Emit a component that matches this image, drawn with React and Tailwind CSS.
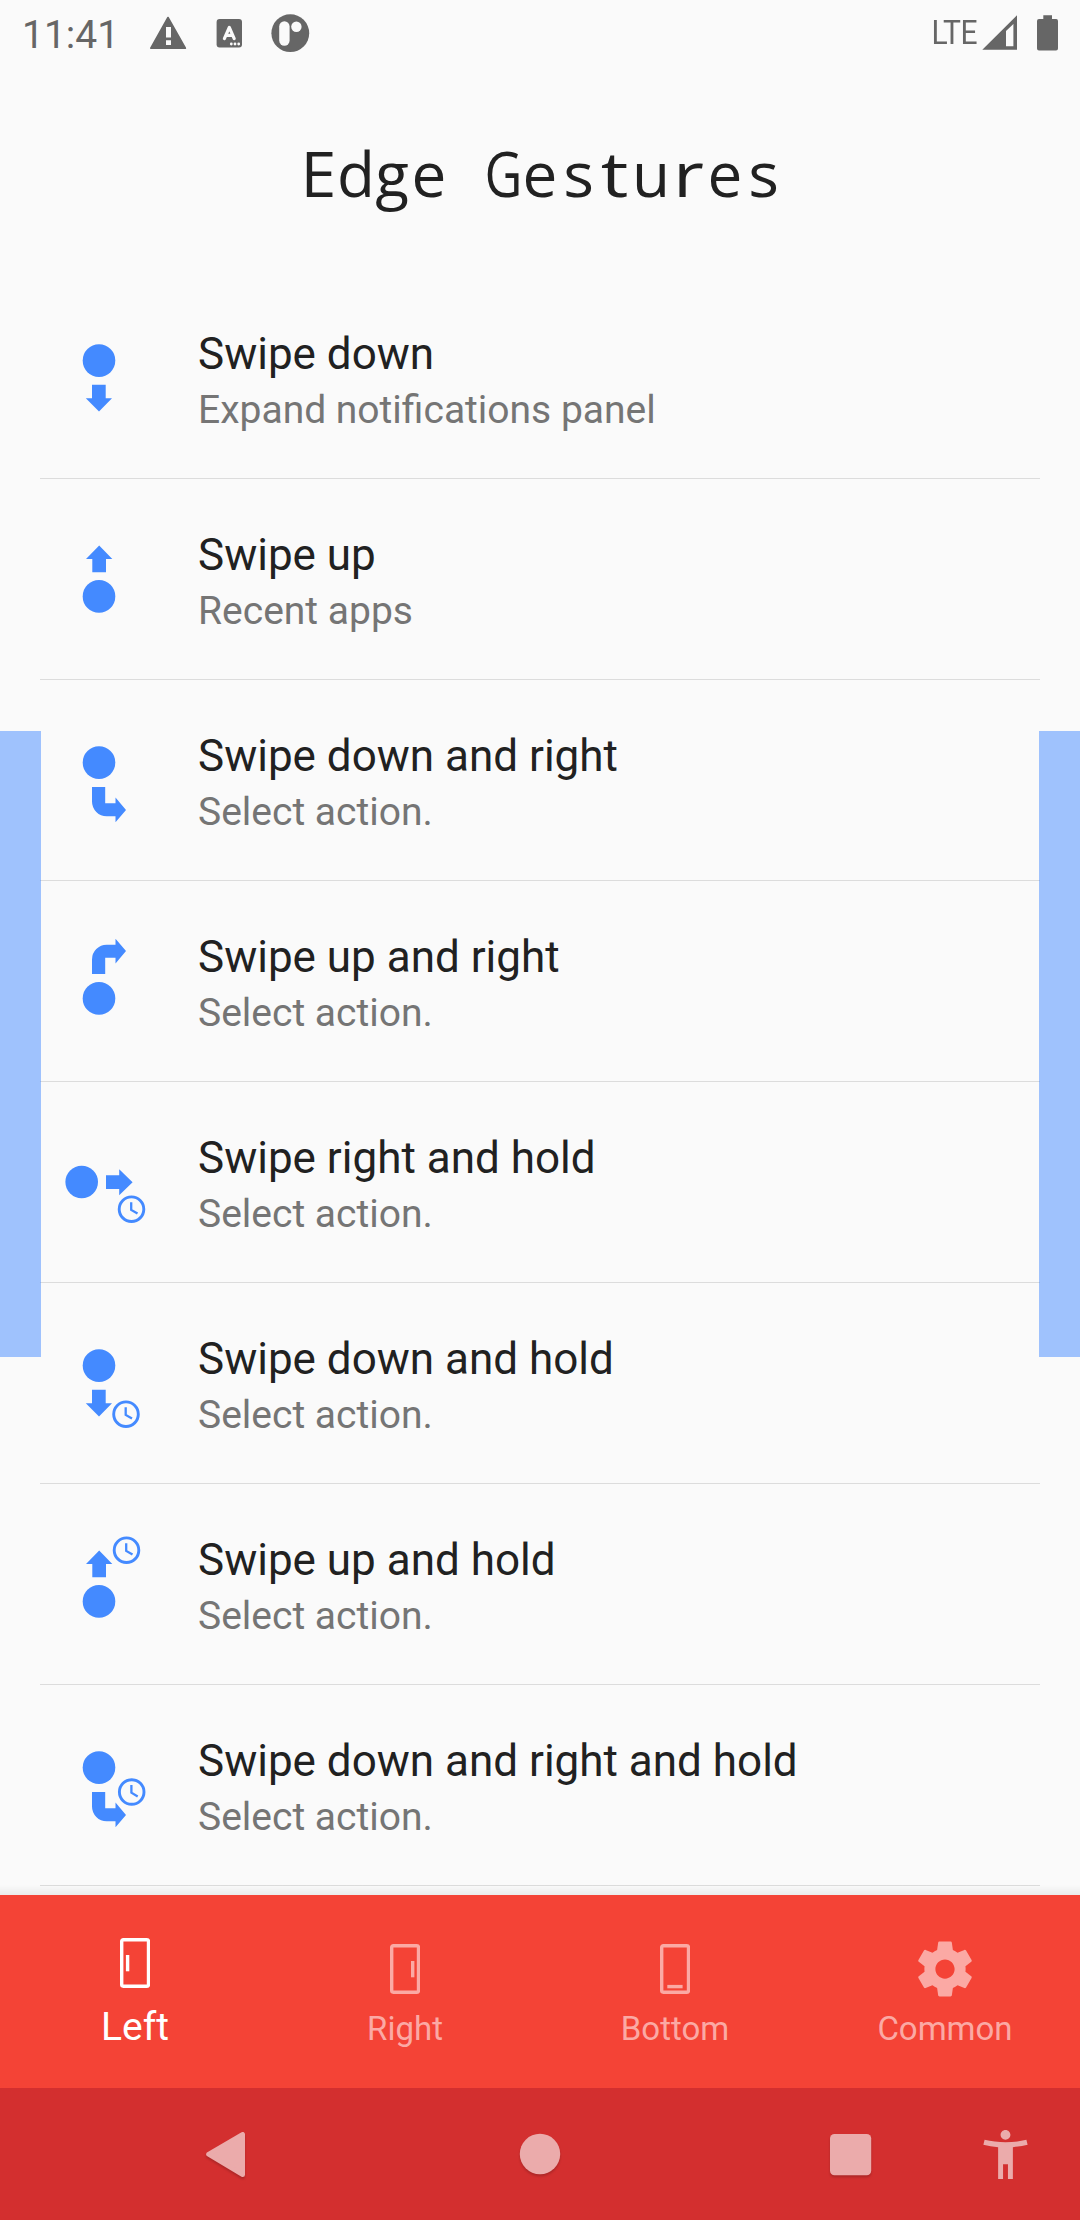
import React from "react";

const BLUE = "#448aff";

function Dot({ x, y }) {
  return <circle cx={x} cy={y} r="16.3" />;
}

function Clock({ x, y }) {
  return (
    <g transform={`translate(${x} ${y})`} fill="none" stroke={BLUE} strokeWidth="2.9">
      <circle r="12.3" />
      <path d="M-0.3 -7V0.7L6 4.4" strokeWidth="2.3" />
    </g>
  );
}

const ARROW_DOWN = "M92 106.7H105.7V120.3H112L99 133.5L85.8 120.3H92Z";
const ARROW_UP = "M92.3 93.3H106V80H112.3L99.2 66.5L86 80H92.3Z";
const ARROW_RIGHT = "M106 93.3V107H119.2V113.3L132.6 100.2L119.2 87.2V93.3Z";
const TURN_DOWN = "M92 107H105.2V123.3H115.5V117.6L126 130L115.5 142.2V136.3H106.7A14.7 14.7 0 0 1 92 121.6Z";
const TURN_UP = "M92 93H105.2V76.7H115.5V82.4L126 70L115.5 57.8V63.7H106.7A14.7 14.7 0 0 0 92 78.4Z";

const gestures = [
  { title: "Swipe down", sub: "Expand notifications panel", dot: [99, 82.6], path: ARROW_DOWN },
  { title: "Swipe up", sub: "Recent apps", dot: [99, 117.4], path: ARROW_UP },
  { title: "Swipe down and right", sub: "Select action.", dot: [99, 82.6], path: TURN_DOWN },
  { title: "Swipe up and right", sub: "Select action.", dot: [99, 117.4], path: TURN_UP },
  { title: "Swipe right and hold", sub: "Select action.", dot: [81.7, 100], path: ARROW_RIGHT, clock: [131.5, 127.2] },
  { title: "Swipe down and hold", sub: "Select action.", dot: [99, 82.6], path: ARROW_DOWN, clock: [126, 131.2] },
  { title: "Swipe up and hold", sub: "Select action.", dot: [99, 117.4], path: ARROW_UP, clock: [126.5, 66.2] },
  { title: "Swipe down and right and hold", sub: "Select action.", dot: [99, 82.6], path: TURN_DOWN, clock: [131.7, 107] },
];

function GestureRow({ item }) {
  return (
    <li className="flex h-[201px] border-b border-[#dcdcdc]">
      <svg className="h-[200px] w-[158px] shrink-0" viewBox="40 0 158 200" fill={BLUE}>
        <Dot x={item.dot[0]} y={item.dot[1]} />
        <path d={item.path} />
        {item.clock && <Clock x={item.clock[0]} y={item.clock[1]} />}
      </svg>
      <div className="pt-[50px]">
        <p className="text-[44px] leading-[52px] text-[#212121]">{item.title}</p>
        <p className="mt-[8px] text-[39px] leading-[45px] text-[#757575]">{item.sub}</p>
      </div>
    </li>
  );
}

const letterFit = {
  G: "scale-x-[0.84]",
  t: "scale-x-[1.25]",
  r: "scale-x-[1.22]",
  E: "scale-x-[1.04]",
  d: "translate-x-px",
  s: "translate-x-px scale-x-[1.04]",
};

function PageTitle({ text }) {
  return (
    <h1 className="flex justify-center whitespace-pre font-['Open_Sans',sans-serif] text-[62px] leading-[84px] text-[#212121]">
      <span>
        {text.split("").map((letter, i) => (
          <span key={i} className={`inline-flex w-[37px] justify-center ${letterFit[letter] || ""}`}>
            {letter}
          </span>
        ))}
      </span>
    </h1>
  );
}

function StatusBar() {
  return (
    <header className="flex h-[66px] text-[#666666]">
      <span className="w-[124px] pl-[22px] pt-[13px] text-[39px] leading-[45px]">11:41</span>
      <svg className="h-[66px] w-[200px]" viewBox="124 0 200 66" fill="#666666">
        <path d="M168 17.5L185.4 48.2H150.8Z" stroke="#666666" strokeWidth="1.6" strokeLinejoin="round" />
        <path d="M166 27H171V37.5H166ZM166 40.3H171V45H166Z" fill="#fafafa" />
        <rect x="216.6" y="19" width="25.4" height="28.5" rx="3" />
        <path d="M224.4 38.6L229.3 27.4L234.2 38.6M226.5 35.4H232" fill="none" stroke="#fafafa" strokeWidth="3.2" strokeLinecap="round" strokeLinejoin="round" />
        <g fill="#fafafa">
          <circle cx="231.3" cy="44" r="1.4" />
          <circle cx="235" cy="44" r="1.4" />
          <circle cx="238.7" cy="44" r="1.4" />
        </g>
        <circle cx="290.3" cy="33.2" r="18.9" />
        <rect x="279.2" y="21.3" width="10.4" height="24.4" rx="5.2" fill="#fafafa" />
        <circle cx="296.4" cy="26.8" r="5.2" fill="#fafafa" />
      </svg>
      <span className="ml-auto origin-right scale-x-[0.91] pt-[13px] text-[33px] leading-[39px] tracking-[-0.6px]">LTE</span>
      <svg className="h-[66px] w-[103px]" viewBox="977 0 103 66" fill="#666666">
        <path fillRule="evenodd" d="M982.3 49.8H1017V15.3ZM1006 31L1013.4 24V46.2H1006Z" />
        <path d="M1043.3 15.2H1052V19H1056.2A2 2 0 0 1 1058 21V48.4A2 2 0 0 1 1056 50.4H1039A2 2 0 0 1 1037 48.4V21A2 2 0 0 1 1039 19H1043.3Z" />
      </svg>
    </header>
  );
}

function PhoneIcon({ bar }) {
  return (
    <svg className="h-[50px] w-[30px]" viewBox="0 0 30 50" fill="none" stroke="currentColor" strokeWidth="3.4">
      <rect x="1.7" y="1.8" width="26.8" height="46.4" rx="1.6" />
      <path d={bar} />
    </svg>
  );
}

function GearIcon() {
  return (
    <svg className="-my-2 h-[66px] w-[66px]" viewBox="0 0 24 24" fill="currentColor">
      <path d="M19.43 12.98c.04-.32.07-.64.07-.98s-.03-.66-.07-.98l2.11-1.65c.19-.15.24-.42.12-.64l-2-3.46c-.12-.22-.39-.3-.61-.22l-2.49 1c-.52-.4-1.08-.73-1.69-.98l-.38-2.65C14.46 2.18 14.25 2 14 2h-4c-.25 0-.46.18-.49.42l-.38 2.65c-.61.25-1.17.59-1.69.98l-2.49-1c-.23-.09-.49 0-.61.22l-2 3.46c-.13.22-.07.49.12.64l2.11 1.65c-.04.32-.07.65-.07.98s.03.66.07.98l-2.11 1.65c-.19.15-.24.42-.12.64l2 3.46c.12.22.39.3.61.22l2.49-1c.52.4 1.08.73 1.69.98l.38 2.65c.03.24.24.42.49.42h4c.25 0 .46-.18.49-.42l.38-2.65c.61-.25 1.17-.59 1.69-.98l2.49 1c.23.09.49 0 .61-.22l2-3.46c.12-.22.07-.49-.12-.64l-2.11-1.65zM12 15.5c-1.93 0-3.5-1.57-3.5-3.5s1.57-3.5 3.5-3.5 3.5 1.57 3.5 3.5-1.57 3.5-3.5 3.5z" />
    </svg>
  );
}

const tabs = [
  { label: "Left", icon: <PhoneIcon bar="M7.6 17V33.3" />, active: true },
  { label: "Right", icon: <PhoneIcon bar="M22.7 17V33.3" /> },
  { label: "Bottom", icon: <PhoneIcon bar="M7.3 42.6H22.6" /> },
  { label: "Common", icon: <GearIcon /> },
];

function TabBar() {
  return (
    <nav className="relative grid h-[193px] grid-cols-4 bg-[#f44336]">
      <div className="absolute inset-x-0 bottom-full h-[10px] bg-gradient-to-t from-black/6 to-transparent" />
      {tabs.map((tab) =>
        tab.active ? (
          <div key={tab.label} className="flex flex-col items-center pt-[43px] text-white">
            {tab.icon}
            <span className="mt-[17px] text-[39px] leading-[45px]">{tab.label}</span>
          </div>
        ) : (
          <div key={tab.label} className="flex flex-col items-center pt-[49px] text-[#fba9a4]">
            {tab.icon}
            <span className="mt-[15px] text-[33px] leading-[39px]">{tab.label}</span>
          </div>
        )
      )}
    </nav>
  );
}

function SystemNav() {
  return (
    <footer className="flex h-[132px] bg-[#d32f2f] pl-[189px] text-[#ebabab]">
      <svg className="h-[132px] w-[80px] drop-shadow-[0_2px_1px_rgba(0,0,0,0.18)]" viewBox="189 0 80 132" fill="currentColor">
        <path d="M208.5 66.3L242.7 46.3V86.7Z" stroke="currentColor" strokeWidth="4.6" strokeLinejoin="round" />
      </svg>
      <svg className="ml-[231px] h-[132px] w-[80px] drop-shadow-[0_2px_1px_rgba(0,0,0,0.18)]" viewBox="500 0 80 132" fill="currentColor">
        <circle cx="540" cy="66" r="20.2" />
      </svg>
      <svg className="ml-[231px] h-[132px] w-[80px] drop-shadow-[0_2px_1px_rgba(0,0,0,0.18)]" viewBox="811 0 80 132" fill="currentColor">
        <rect x="830" y="46" width="41.2" height="41.2" rx="4.5" />
      </svg>
      <svg className="ml-[85px] mt-[37px] h-[59px] w-[59px]" viewBox="0 0 24 24" fill="currentColor">
        <path d="M20.5 6c-2.61.7-5.67 1-8.5 1s-5.89-.3-8.5-1L3 8c1.86.5 4 .83 6 1v13h2v-6h2v6h2V9c2-.17 4.14-.5 6-1l-.5-2zM12 6c1.1 0 2-.9 2-2s-.9-2-2-2-2 .9-2 2 .9 2 2 2z" />
      </svg>
    </footer>
  );
}

export default function App() {
  return (
    <div className="relative flex h-[2220px] w-[1080px] flex-col overflow-hidden bg-[#fafafa] font-['Roboto',sans-serif]">
      <StatusBar />
      <div className="h-[212px] pt-[65px]">
        <PageTitle text="Edge Gestures" />
      </div>
      <ul className="mx-10 h-[1617px]">
        {gestures.map((item) => (
          <GestureRow key={item.title} item={item} />
        ))}
      </ul>
      <div className="absolute left-0 top-[731px] h-[626px] w-[41px] bg-[#448aff]/50" />
      <div className="absolute right-0 top-[731px] h-[626px] w-[41px] bg-[#448aff]/50" />
      <TabBar />
      <SystemNav />
    </div>
  );
}
